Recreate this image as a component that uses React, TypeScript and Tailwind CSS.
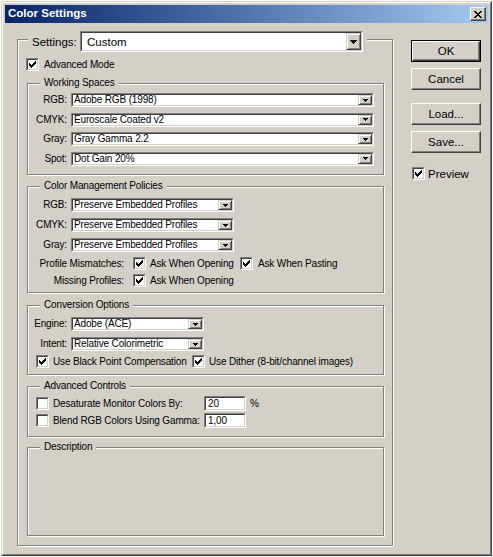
import React from "react";

function Check() {
  return (
    <svg width="7" height="7" viewBox="0 0 7 7" shapeRendering="crispEdges">
      <path
        d="M6 0h1v1h-1z M5 1h2v1h-2z M0 2h1v1h-1z M4 2h3v1h-3z M0 3h2v1h-2z M3 3h3v1h-3z M0 4h5v1h-5z M1 5h3v1h-3z M2 6h1v1h-1z"
        fill="#000"
      />
    </svg>
  );
}

function CheckBox({ checked }: { checked?: boolean }) {
  return (
    <div className="w-[13px] h-[13px] shrink-0 border border-t-[#808080] border-l-[#808080] border-r-white border-b-white">
      <div className="w-full h-full bg-white border border-t-[#404040] border-l-[#404040] border-r-[#d4d0c8] border-b-[#d4d0c8] flex items-center justify-center">
        {checked && <Check />}
      </div>
    </div>
  );
}

function ArrowBtn({ big }: { big?: boolean }) {
  return (
    <div
      className={`${big ? "w-[15px]" : "w-[14px]"} h-full shrink-0 bg-[#d4d0c8] border border-t-[#d4d0c8] border-l-[#d4d0c8] border-r-[#404040] border-b-[#404040] shadow-[inset_1px_1px_0_#fff,inset_-1px_-1px_0_#808080] flex items-center justify-center`}
    >
      {big ? (
        <svg width="7" height="4" viewBox="0 0 7 4" shapeRendering="crispEdges">
          <path d="M0 0h7v1h-7z M1 1h5v1h-5z M2 2h3v1h-3z M3 3h1v1h-1z" fill="#000" />
        </svg>
      ) : (
        <svg width="5" height="3" viewBox="0 0 5 3" shapeRendering="crispEdges">
          <path d="M0 0h5v1h-5z M1 1h3v1h-3z M2 2h1v1h-1z" fill="#000" />
        </svg>
      )}
    </div>
  );
}

function Select({ className, text, big }: { className: string; text: string; big?: boolean }) {
  return (
    <div className={`${className} shrink-0 border border-t-[#808080] border-l-[#808080] border-r-white border-b-white`}>
      <div className="h-full flex bg-white border border-t-[#404040] border-l-[#404040] border-r-[#d4d0c8] border-b-[#d4d0c8]">
        <div
          className={`flex-1 flex items-center whitespace-nowrap overflow-hidden ${
            big ? "pl-[5px] text-[11.5px] tracking-normal" : "pl-[1px] text-[10px] leading-[10px]"
          }`}
        >
          {text}
        </div>
        <ArrowBtn big={big} />
      </div>
    </div>
  );
}

function TextField({ value }: { value: string }) {
  return (
    <div className="w-[42px] h-[15px] shrink-0 border border-t-[#808080] border-l-[#808080] border-r-white border-b-white">
      <div className="h-full bg-white border border-t-[#404040] border-l-[#404040] border-r-[#d4d0c8] border-b-[#d4d0c8] flex items-center pl-[2px] text-[10px] leading-[10px]">
        {value}
      </div>
    </div>
  );
}

function Group({ title, className, children }: { title: string; className: string; children?: React.ReactNode }) {
  return (
    <div
      className={`${className} w-[357px] ml-[9px] shrink-0 border border-[#808080] shadow-[inset_1px_1px_0_#fff,1px_1px_0_#fff] flex flex-col`}
    >
      <div className="-mt-[7px] ml-[12px] self-start px-[4px] bg-[#d4d0c8] leading-[12px] h-[12px] whitespace-nowrap">
        {title}
      </div>
      {children}
    </div>
  );
}

function Button({ label, isDefault, className }: { label: string; isDefault?: boolean; className?: string }) {
  const inner = (
    <div className="w-full h-full border border-t-white border-l-white border-r-[#404040] border-b-[#404040] shadow-[inset_-1px_-1px_0_#808080] flex items-center justify-center text-[11.5px] tracking-normal">
      {label}
    </div>
  );
  return (
    <div className={`${className ?? ""} w-[70px] h-[22px] ${isDefault ? "border border-black" : ""}`}>{inner}</div>
  );
}

function LabeledSelect({ label, text, selectClass }: { label: string; text: string; selectClass: string }) {
  return (
    <div className="flex items-center gap-[4px] h-[14px]">
      <div className="w-[39px] text-right whitespace-nowrap leading-[12px]">{label}</div>
      <Select className={selectClass} text={text} />
    </div>
  );
}

export default function App() {
  return (
    <div className="bg-white w-[493px] h-[557px] pt-[1px] pl-[1px] font-['Liberation_Sans',Arial,sans-serif] text-[10px] leading-[12px] tracking-[-0.15px] text-black">
      <div className="w-[491px] h-[555px] bg-[#d4d0c8] border border-t-[#d4d0c8] border-l-[#d4d0c8] border-r-[#404040] border-b-[#404040]">
        <div className="h-full border border-t-white border-l-white border-r-[#808080] border-b-[#808080] p-[2px] flex flex-col">
          {/* Title bar */}
          <div className="h-[18px] shrink-0 flex items-center bg-linear-to-r from-[#0a246a] to-[#a6caf0] pl-[3px] pr-[2px]">
            <span className="text-white font-bold text-[11.5px] leading-none tracking-normal">Color Settings</span>
            <div className="ml-auto w-[16px] h-[14px] bg-[#d4d0c8] border border-t-white border-l-white border-r-[#404040] border-b-[#404040] shadow-[inset_-1px_-1px_0_#808080] flex items-center justify-center">
              <svg width="8" height="7" viewBox="0 0 8 7" shapeRendering="crispEdges">
                <path
                  d="M0 0h2v1h-2z M6 0h2v1h-2z M1 1h2v1h-2z M5 1h2v1h-2z M2 2h4v1h-4z M3 3h2v1h-2z M2 4h4v1h-4z M1 5h2v1h-2z M5 5h2v1h-2z M0 6h2v1h-2z M6 6h2v1h-2z"
                  fill="#000"
                />
              </svg>
            </div>
          </div>

          {/* Client */}
          <div className="flex pl-[12px]">
            {/* Outer settings group */}
            <div className="mt-[16px] w-[376px] h-[507px] shrink-0 border border-[#808080] shadow-[inset_1px_1px_0_#fff,1px_1px_0_#fff] flex flex-col">
              <div className="-mt-[9px] ml-[10px] self-start flex items-center px-[4px] bg-[#d4d0c8] h-[21px]">
                <div className="w-[48px] text-[11.5px] tracking-normal whitespace-nowrap">Settings:</div>
                <Select className="w-[283px] h-[21px]" text="Custom" big />
              </div>

              <div className="mt-[6px] ml-[8px] flex items-center gap-[5px] h-[13px]">
                <CheckBox checked />
                <span className="whitespace-nowrap">Advanced Mode</span>
              </div>

              <Group title="Working Spaces" className="mt-[12px] h-[92px]">
                <div className="mt-[4px] flex flex-col gap-[5.5px]">
                  <LabeledSelect label="RGB:" text="Adobe RGB (1998)" selectClass="w-[303px] h-[14px]" />
                  <LabeledSelect label="CMYK:" text="Euroscale Coated v2" selectClass="w-[303px] h-[14px]" />
                  <LabeledSelect label="Gray:" text="Gray Gamma 2.2" selectClass="w-[303px] h-[14px]" />
                  <LabeledSelect label="Spot:" text="Dot Gain 20%" selectClass="w-[303px] h-[14px]" />
                </div>
              </Group>

              <Group title="Color Management Policies" className="mt-[11px] h-[107px]">
                <div className="mt-[6px] flex flex-col gap-[6px]">
                  <LabeledSelect label="RGB:" text="Preserve Embedded Profiles" selectClass="w-[163px] h-[14px]" />
                  <LabeledSelect label="CMYK:" text="Preserve Embedded Profiles" selectClass="w-[163px] h-[14px]" />
                  <LabeledSelect label="Gray:" text="Preserve Embedded Profiles" selectClass="w-[163px] h-[14px]" />
                </div>
                <div className="mt-[5px] flex items-center h-[13px]">
                  <div className="w-[96px] text-right whitespace-nowrap">Profile Mismatches:</div>
                  <div className="ml-[9px]">
                    <CheckBox checked />
                  </div>
                  <span className="ml-[4px] w-[86px] whitespace-nowrap">Ask When Opening</span>
                  <div className="ml-[4px]">
                    <CheckBox checked />
                  </div>
                  <span className="ml-[5px] whitespace-nowrap">Ask When Pasting</span>
                </div>
                <div className="mt-[4px] flex items-center h-[13px]">
                  <div className="w-[96px] text-right whitespace-nowrap">Missing Profiles:</div>
                  <div className="ml-[9px]">
                    <CheckBox checked />
                  </div>
                  <span className="ml-[4px] whitespace-nowrap">Ask When Opening</span>
                </div>
              </Group>

              <Group title="Conversion Options" className="mt-[12px] h-[70px]">
                <div className="mt-[6px] flex flex-col gap-[6px]">
                  <LabeledSelect label="Engine:" text="Adobe (ACE)" selectClass="w-[133px] h-[14px]" />
                  <LabeledSelect label="Intent:" text="Relative Colorimetric" selectClass="w-[133px] h-[14px]" />
                </div>
                <div className="mt-[4px] ml-[8px] flex items-center h-[13px]">
                  <CheckBox checked />
                  <span className="ml-[4px] w-[135px] whitespace-nowrap">Use Black Point Compensation</span>
                  <div className="ml-[4px]">
                    <CheckBox checked />
                  </div>
                  <span className="ml-[4px] whitespace-nowrap">Use Dither (8-bit/channel images)</span>
                </div>
              </Group>

              <Group title="Advanced Controls" className="mt-[11px] h-[51px]">
                <div className="mt-[4px] ml-[8px] flex items-center h-[15px]">
                  <CheckBox />
                  <span className="ml-[4px] w-[147px] whitespace-nowrap">Desaturate Monitor Colors By:</span>
                  <div className="ml-[4px]">
                    <TextField value="20" />
                  </div>
                  <span className="ml-[4px]">%</span>
                </div>
                <div className="mt-[2px] ml-[8px] flex items-center h-[15px]">
                  <CheckBox />
                  <span className="ml-[4px] w-[147px] whitespace-nowrap">Blend RGB Colors Using Gamma:</span>
                  <div className="ml-[4px]">
                    <TextField value="1,00" />
                  </div>
                </div>
              </Group>

              <Group title="Description" className="mt-[10px] h-[89px]" />
            </div>

            {/* Right column */}
            <div className="ml-[18px] mt-[17px] w-[70px] flex flex-col">
              <Button label="OK" isDefault />
              <Button label="Cancel" className="mt-[6px]" />
              <Button label="Load..." className="mt-[13px]" />
              <Button label="Save..." className="mt-[6px]" />
              <div className="mt-[14px] ml-[1px] flex items-center gap-[3px] h-[13px]">
                <CheckBox checked />
                <span className="text-[11.5px] tracking-normal whitespace-nowrap">Preview</span>
              </div>
            </div>
          </div>
        </div>
      </div>
    </div>
  );
}
